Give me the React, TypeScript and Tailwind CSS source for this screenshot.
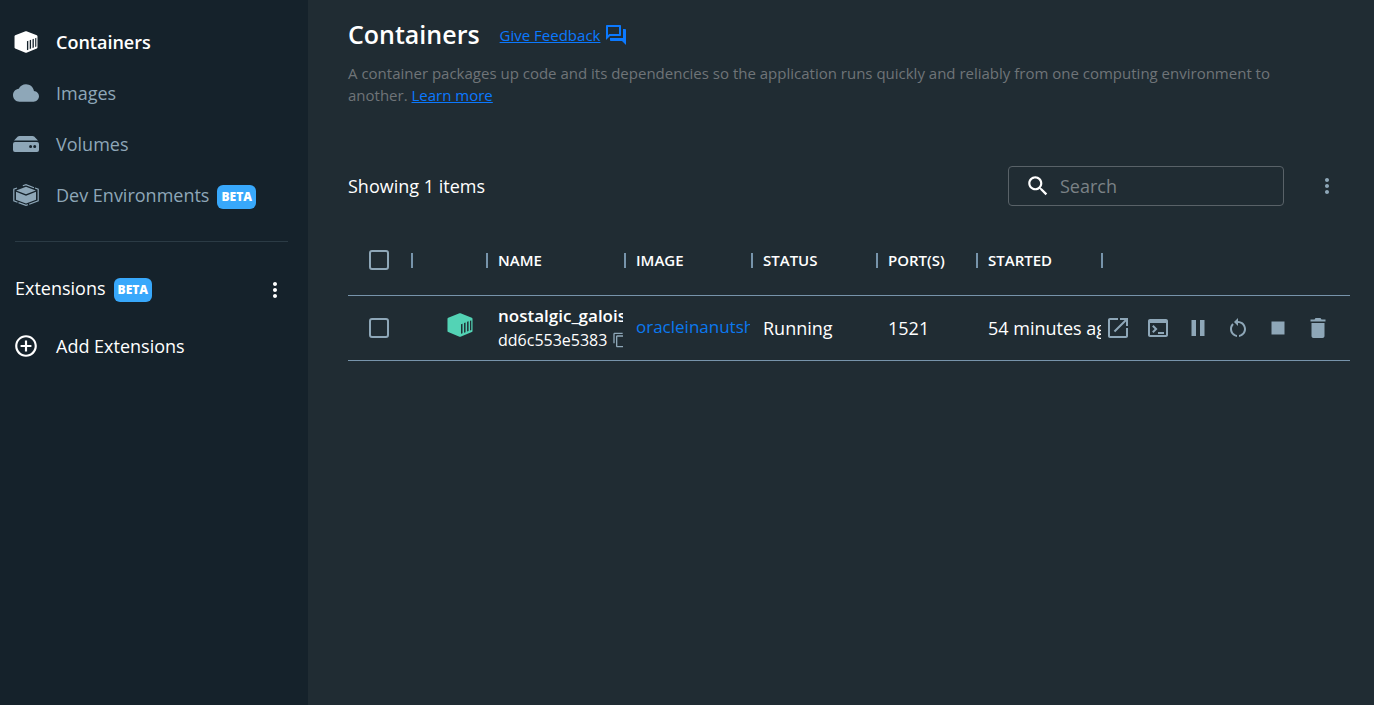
import type { ReactNode } from "react";

type IconProps = { className?: string };

function Glyph({ d, className = "size-6" }: IconProps & { d: string }) {
  return (
    <svg viewBox="0 0 24 24" fill="currentColor" aria-hidden="true" className={className}>
      <path d={d} />
    </svg>
  );
}

const paths = {
  cloud: "M19.35 10.04C18.67 6.59 15.64 4 12 4 9.11 4 6.6 5.64 5.35 8.04 2.34 8.36 0 10.91 0 14c0 3.31 2.69 6 6 6h13c2.76 0 5-2.24 5-5 0-2.64-2.05-4.78-4.65-4.96z",
  more: "M12 8c1.1 0 2-.9 2-2s-.9-2-2-2-2 .9-2 2 .9 2 2 2zm0 2c-1.1 0-2 .9-2 2s.9 2 2 2 2-.9 2-2-.9-2-2-2zm0 6c-1.1 0-2 .9-2 2s.9 2 2 2 2-.9 2-2-.9-2-2-2z",
  addCircle: "M13 7h-2v4H7v2h4v4h2v-4h4v-2h-4V7zm-1-5C6.48 2 2 6.48 2 12s4.48 10 10 10 10-4.48 10-10S17.52 2 12 2zm0 18c-4.41 0-8-3.59-8-8s3.59-8 8-8 8 3.59 8 8-3.59 8-8 8z",
  feedback: "M15 4v7H5.17L4 12.17V4h11m1-2H3c-.55 0-1 .45-1 1v14l4-4h10c.55 0 1-.45 1-1V3c0-.55-.45-1-1-1zm5 4h-2v9H6v2c0 .55.45 1 1 1h11l4 4V7c0-.55-.45-1-1-1z",
  search: "M15.5 14h-.79l-.28-.27C15.41 12.59 16 11.11 16 9.5 16 5.91 13.09 3 9.5 3S3 5.91 3 9.5 5.91 16 9.5 16c1.61 0 3.09-.59 4.23-1.57l.27.28v.79l5 4.99L20.49 19l-4.99-5zm-6 0C7.01 14 5 11.99 5 9.5S7.01 5 9.5 5 14 7.01 14 9.5 11.99 14 9.5 14z",
  copy: "M16 1H4c-1.1 0-2 .9-2 2v14h2V3h12V1zm3 4H8c-1.1 0-2 .9-2 2v14c0 1.1.9 2 2 2h11c1.1 0 2-.9 2-2V7c0-1.1-.9-2-2-2zm0 16H8V7h11v14z",
  open: "M20 20H4V4h8V2H4c-1.11 0-2 .9-2 2v16c0 1.1.89 2 2 2h16c1.1 0 2-.9 2-2v-8h-2v8zM14 2v2h4.59L7.76 14.83l1.41 1.41L20 5.41V10h2V2h-8z",
  terminal: "M20 3H4c-1.11 0-2 .9-2 2v14c0 1.1.89 2 2 2h16c1.1 0 2-.9 2-2V5c0-1.1-.89-2-2-2zm0 16H4V7h16v12zm-2-1h-6v-2h6v2zM7.5 17l-1.41-1.41L8.67 13l-2.59-2.59L7.5 9l4 4-4 4z",
  pause: "M5.500 20h4.500V4H5.500v16zM14 4v16h4.500V4H14z",
  restart: "M12 5V2L8 6l4 4V7c3.31 0 6 2.69 6 6 0 2.97-2.17 5.43-5 5.91v2.02c3.95-.49 7-3.85 7-7.93 0-4.42-3.58-8-8-8zm-6 8c0-1.65.67-3.15 1.76-4.24L6.34 7.34C4.9 8.79 4 10.79 4 13c0 4.08 3.05 7.44 7 7.93v-2.02c-2.83-.48-5-2.94-5-5.91z",
  stop: "M5.5 5.5h13v13h-13z",
  trash: "M5.500 20c0 1.1.9 2 2 2h9c1.1 0 2-.9 2-2V7H5.500v13zM19.500 3.500h-4l-1-1.500h-5l-1 1.500h-4v2h15v-2z",
};

function ContainerIcon({ className = "" }: IconProps) {
  return (
    <svg viewBox="1 0.5 24 23" fill="currentColor" fillRule="evenodd" aria-hidden="true" className={className}>
      <path d="M12.500.8Q13 .6 13.500.8L24.300 5Q25 5.300 25 6V17.800Q25 18.500 24.300 18.800L13.500 23.200Q13 23.400 12.500 23.200L1.700 18.800Q1 18.500 1 17.800V6Q1 5.300 1.700 5ZM14 11.200V20.500L15.400 20V10.700ZM16.900 10.100V19.400L18.300 18.900V9.600ZM19.800 9V18.300L21.200 17.800V8.500ZM22.600 8V17.200L23.800 16.800V7.600Z" />
    </svg>
  );
}

function VolumeIcon() {
  return (
    <svg viewBox="0 0 26 16" fill="currentColor" fillRule="evenodd" aria-hidden="true" className="h-4 w-[26px]">
      <path d="M6.500 0h13q1 0 1.700.6L25 4.600H1L4.800.6Q5.500 0 6.500 0ZM2 6h22q2 0 2 2v6q0 2-2 2H2q-2 0-2-2V8q0-2 2-2ZM17.600 9.100a1.500 1.500 0 1 0 0 3 1.500 1.500 0 1 0 0-3ZM21.700 9.100a1.500 1.500 0 1 0 0 3 1.500 1.500 0 1 0 0-3Z" />
    </svg>
  );
}

function DevIcon() {
  return (
    <svg viewBox="0 0 26 22" aria-hidden="true" className="h-[22px] w-[26px]">
      <g fill="currentColor">
        <path d="M13 2.700 22.800 6.500 13 10.300 3.200 6.500Z" />
        <path d="M3 7.800 13 11.700 23 7.800V15.700L13 19.600 3 15.700Z" />
      </g>
      <path
        d="M9.800 1.800 13 .7l8 3M4 4 .8 5.200V16.800L4.500 18.200M22 4l3.200 1.200V16.800L16.200 20.200M5.500 18.600 13 21.400l2-.7"
        fill="none"
        stroke="currentColor"
        strokeWidth="1.200"
      />
    </svg>
  );
}

function Beta() {
  return (
    <span className="flex h-6 items-center rounded-md bg-[#38a8fb] px-1 pt-px text-xs font-extrabold text-white">
      BETA
    </span>
  );
}

function NavItem({ icon, label, active, beta }: { icon: ReactNode; label: string; active?: boolean; beta?: boolean }) {
  return (
    <li>
      <a
        href="#"
        aria-current={active ? "page" : undefined}
        className={
          active
            ? "flex h-[51px] items-center font-semibold text-white"
            : "flex h-[51px] items-center text-[#8ea7b8]"
        }
      >
        <span className="flex w-[43px] shrink-0 items-center">{icon}</span>
        <span>{label}</span>
        {beta && (
          <span className="ml-2 pt-1">
            <Beta />
          </span>
        )}
      </a>
    </li>
  );
}

function Sidebar() {
  return (
    <aside className="w-[308px] shrink-0 bg-[#15222b] text-lg text-white">
      <nav aria-label="Main" className="pt-4 pl-[13px]">
        <ul>
          <NavItem active label="Containers" icon={<ContainerIcon className="h-[22px] w-[26px]" />} />
          <NavItem label="Images" icon={<Glyph d={paths.cloud} className="size-[26px]" />} />
          <NavItem label="Volumes" icon={<VolumeIcon />} />
          <NavItem label="Dev Environments" beta icon={<DevIcon />} />
        </ul>
      </nav>
      <hr className="mt-[21px] mr-5 ml-[15px] border-[#2b3b45]" />
      <div className="mt-8 flex h-[28px] items-center pr-[21px] pl-[15px]">
        <h2>Extensions</h2>
        <span className="ml-2 pt-[3px]">
          <Beta />
        </span>
        <button type="button" aria-label="Extension options" className="ml-auto pt-[3px]">
          <Glyph d={paths.more} />
        </button>
      </div>
      <button type="button" className="mt-[30px] flex h-[28px] items-center pl-[13px]">
        <span className="w-[43px]">
          <Glyph d={paths.addCircle} className="size-[26px]" />
        </span>
        Add Extensions
      </button>
    </aside>
  );
}

const columns = [
  { label: "", width: "w-[75px]" },
  { label: "NAME", width: "w-[138px]" },
  { label: "IMAGE", width: "w-[127px]" },
  { label: "STATUS", width: "w-[125px]" },
  { label: "PORT(S)", width: "w-[100px]" },
  { label: "STARTED", width: "w-[125px]" },
];

const actions = [
  { label: "Open in browser", d: paths.open },
  { label: "Open in terminal", d: paths.terminal },
  { label: "Pause", d: paths.pause },
  { label: "Restart", d: paths.restart },
  { label: "Stop", d: paths.stop },
  { label: "Delete", d: paths.trash },
];

function Tick({ label }: { label: string }) {
  return (
    <input
      type="checkbox"
      aria-label={label}
      className="block size-5 appearance-none rounded-[3px] border-2 border-[#8ea7b8] checked:bg-[#8ea7b8]"
    />
  );
}

function Divider() {
  return <span className="ml-auto h-[15px] w-[2px] shrink-0 bg-[#7794ab]" />;
}

function ContainerTable() {
  return (
    <table className="mt-5 w-full table-fixed text-left text-lg text-white">
      <thead>
        <tr className="h-[69px] border-b border-[#7794ab] text-[15px]">
          <th className="w-[65px]">
            <div className="flex items-center pl-[21px]">
              <Tick label="Select all containers" />
              <Divider />
            </div>
          </th>
          {columns.map((c) => (
            <th key={c.label} className={c.width}>
              <div className="flex items-center pl-[10px] font-semibold">
                {c.label}
                <Divider />
              </div>
            </th>
          ))}
          <th aria-label="Actions" />
        </tr>
      </thead>
      <tbody>
        <tr className="h-[65px] border-b border-[#7794ab]">
          <td className="pl-[21px]">
            <Tick label="Select nostalgic_galois" />
          </td>
          <td className="pl-[34px] text-[#53d3b5]">
            <ContainerIcon className="mb-[5px] h-6 w-[26px]" />
          </td>
          <td className="pr-[3px] pl-[10px]">
            <div className="overflow-hidden text-[17px] leading-6 font-semibold whitespace-nowrap">
              nostalgic_galois
            </div>
            <div className="flex items-center overflow-hidden text-base leading-6">
              dd6c553e5383
              <button type="button" aria-label="Copy id" className="ml-[5px] shrink-0 text-[#8ea7b8]">
                <Glyph d={paths.copy} className="size-4" />
              </button>
            </div>
          </td>
          <td className="pr-[3px] pl-[10px]">
            <a href="#" className="block overflow-hidden text-[17px] whitespace-nowrap text-[#0b79f0]">
              oracleinanutshell
            </a>
          </td>
          <td className="pl-[10px]">Running</td>
          <td className="pl-[10px]">1521</td>
          <td className="pr-[2px] pl-[10px]">
            <div className="overflow-hidden whitespace-nowrap">54 minutes ago</div>
          </td>
          <td className="pl-[3px] text-[#8ea7b8]">
            <div className="flex gap-4">
              {actions.map((a) => (
                <button key={a.label} type="button" aria-label={a.label}>
                  <Glyph d={a.d} />
                </button>
              ))}
            </div>
          </td>
        </tr>
      </tbody>
    </table>
  );
}

export default function App() {
  return (
    <div className="flex min-h-screen bg-[#202c33] font-['Open_Sans',sans-serif]">
      <Sidebar />
      <main className="min-w-0 flex-1 pt-[17px] pr-6 pl-10">
        <header>
          <div className="flex h-9 items-center">
            <h1 className="text-[25px] font-semibold text-white">Containers</h1>
            <a href="#" className="ml-5 flex items-center gap-1 text-[15px] text-[#0b79ff]">
              <span className="underline">Give Feedback</span>
              <Glyph d={paths.feedback} />
            </a>
          </div>
          <p className="mt-[9px] pr-8 text-[15px] leading-[22px] text-[#6f7478]">
            A container packages up code and its dependencies so the application runs quickly and reliably from one
            computing environment to another.{" "}
            <a href="#" className="text-[#0b79ff] underline">
              Learn more
            </a>
          </p>
        </header>
        <div className="mt-[60px] flex items-center pr-[11px]">
          <p className="text-lg text-white">Showing 1 items</p>
          <label className="ml-auto flex h-10 w-[276px] items-center rounded border border-[#596268] pl-4 text-white">
            <Glyph d={paths.search} className="size-[26px]" />
            <input
              type="text"
              aria-label="Search"
              placeholder="Search"
              className="ml-[9px] min-w-0 flex-1 bg-transparent text-lg outline-none placeholder:text-[#7b8286]"
            />
          </label>
          <button type="button" aria-label="More options" className="ml-[31px] text-[#8ea7b8]">
            <Glyph d={paths.more} />
          </button>
        </div>
        <ContainerTable />
      </main>
    </div>
  );
}
